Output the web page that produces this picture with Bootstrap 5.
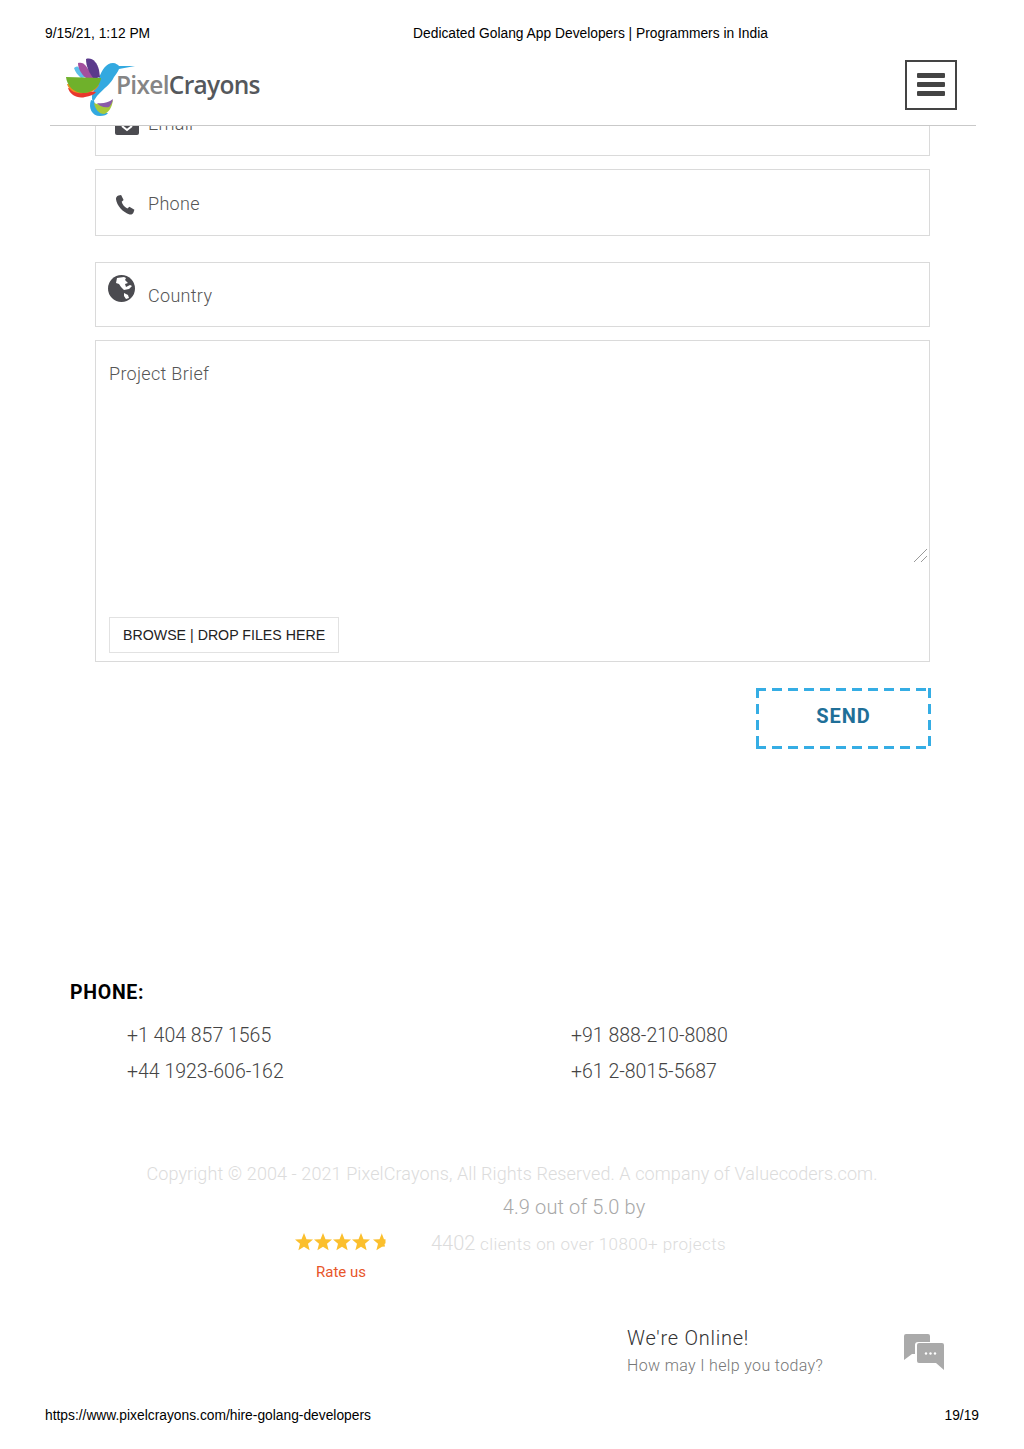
<!DOCTYPE html>
<html lang="en">
<head>
  <meta charset="UTF-8" />
  <meta name="viewport" content="width=device-width, initial-scale=1" />
  <title>Dedicated Golang App Developers | Programmers in India</title>
  <link href="https://cdn.jsdelivr.net/npm/bootstrap@5.3.0/dist/css/bootstrap.min.css" rel="stylesheet" />
  <style>
    body {
      width: 1024px;
      height: 1449px;
      overflow: hidden;
      background: #fff;
      font-family: Roboto, "Liberation Sans", sans-serif;
      font-weight: 300;
      color: #555;
    }

    .print-line {
      font-family: "Liberation Sans", Arial, sans-serif;
      font-size: 13.8px;
      font-weight: 400;
      line-height: 16px;
      color: #000;
      padding: 0 45px;
    }

    .print-top { padding-top: 26px; height: 46px; }
    .print-title { margin-left: 263px; }

    .site-head {
      height: 80px;
      margin: 0 48px 0 50px;
      padding: 0 19px 0 16px;
      border-bottom: 1px solid #c9c9c9;
    }

    .logo-svg { margin-top: 5px; flex: none; }
    .logo-text { font-family: "Open Sans", sans-serif; font-size: 24.5px; font-weight: 600; letter-spacing: -.7px; color: #858585; margin-left: -20px; }
    .logo-text b { color: #55585c; font-weight: 600; }

    .menu-box {
      width: 52px;
      height: 50px;
      border: 2px solid #444;
      border-radius: 0;
      margin-top: -2px;
      padding: 0;
    }
    .menu-box span { display: block; width: 28px; height: 5px; margin: 2px auto; background: #444; border-radius: 1px; }

    .form-wrap { margin: 0 94px 0 95px; }
    .field-clip { height: 30px; overflow: hidden; }
    .field-box {
      border: 1px solid #dadada;
      font-size: 18px;
      letter-spacing: .3px;
      color: #555;
      background: #fff;
    }
    .field-clip .field-box { height: 66px; flex: 0 0 66px; width: 100%; }
    .field-tel { height: 67px; margin-top: 13px; padding-top: 2px; }
    .field-country { height: 65px; margin-top: 26px; }
    .field-brief { height: 322px; margin-top: 13px; padding: 19px 13px 7px; }
    .field-ico { width: 52px; padding-left: 19px; flex: none; }
    .globe-svg { margin: 12px 0 0 -7px; }
    .country-label { margin-top: 19px; }
    .brief-grip { margin: 161px -12px 0 auto; width: 15px; height: 15px; display: block; }
    .browse-btn {
      font-family: "Liberation Sans", Arial, sans-serif;
      font-size: 14.2px;
      color: #222;
      border: 1px solid #e2e2e2;
      border-radius: 0;
      padding: 0 13px;
      height: 36px;
      line-height: 34px;
      margin-top: 54px;
      background: #fff;
    }
    .send-btn {
      width: 175px;
      height: 61px;
      margin: 26px -1px 0 0;
      border: 0;
      border-radius: 0;
      --dash: #35ade4;
      background:
        repeating-linear-gradient(90deg, var(--dash) 0 10px, transparent 10px 16px) top / 100% 3px no-repeat,
        repeating-linear-gradient(90deg, var(--dash) 0 10px, transparent 10px 16px) bottom / 100% 3px no-repeat,
        repeating-linear-gradient(180deg, var(--dash) 0 10px, transparent 10px 16px) left / 3px 100% no-repeat,
        repeating-linear-gradient(180deg, var(--dash) 0 10px, transparent 10px 16px) right / 3px 100% no-repeat;
      color: #1f6f98;
      font-size: 20px;
      font-weight: 700;
      letter-spacing: 1px;
      padding: 0 0 5px;
    }

    .phone-head { margin: 232px 0 0 70px; font-size: 19.5px; font-weight: 700; color: #000; letter-spacing: .7px; line-height: 24px; }
    .phone-grid { margin: 13px 0 0 127px; width: 888px; font-size: 19.5px; letter-spacing: 0; color: #444; }
    .phone-grid .col-6 { height: 36px; line-height: 36px; }

    .copy-line { margin-top: 72px; font-size: 18px; letter-spacing: .1px; color: #dcdcdc; line-height: 24px; text-align: center; }
    .rate-wrap { margin-left: 295px; }
    .rate-left { width: 92px; margin-top: 47px; text-align: center; }
    .rate-link { color: #e8562a; font-size: 15px; font-weight: 400; margin-top: 11px; line-height: 20px; white-space: nowrap; }
    .rate-right { margin-left: 44px; width: 295px; }
    .rate-score { font-size: 20px; letter-spacing: .13px; color: #a8a8a8; line-height: 26px; text-align: center; padding-right: 9px; margin-top: 8px; }
    .rate-count { font-size: 17px; letter-spacing: .43px; color: #dcdcdc; margin-top: 10px; line-height: 26px; white-space: nowrap; }
    .rate-count strong { font-size: 20px; font-weight: 300; letter-spacing: 0; }

    .chat-wrap { margin: 43px 80px 0 627px; height: 83px; }
    .chat-title { font-size: 20px; color: #333; letter-spacing: .75px; line-height: 26px; }
    .chat-sub { font-size: 16px; color: #777; letter-spacing: .35px; line-height: 24px; margin-top: 3px; }
    .chat-ico { margin-top: 9px; }
  </style>
</head>
<body>
  <div class="print-line print-top d-flex">
    <span>9/15/21, 1:12 PM</span>
    <span class="print-title">Dedicated Golang App Developers | Programmers in India</span>
  </div>

  <header class="site-head d-flex justify-content-between align-items-center">
    <a class="d-flex align-items-center text-decoration-none" href="#">
      <svg class="logo-svg" width="70" height="60" viewBox="0 0 70 60">
        <path d="M33 20C36 12 40 5 47 5c3 0 5 2 6 3l16 0-16 3c-1 3-3 5-5 8-3 7-10 11-17 19l-4 6c-2-4-1-8 1-12 2-4 4-8 5-12z" fill="#33a9e0"/>
        <path d="M25 42c-3 8 1 16 9 16 4 0 7-1 8-3-6 0-12-5-14-12z" fill="#33a9e0"/>
        <path d="M28 45c5 2 12 2 19-3-1 8-5 13-9 14-5 0-9-5-10-11z" fill="#a6c93a"/>
        <path d="M31 45c5 1 11 0 16-4-1 4-2 6-4 8-5 1-10-1-12-4z" fill="#8a5aa8"/>
        <path d="M8 10c2-2 4-2 5 0l7 9-5 1C12 17 9 14 8 10z" fill="#5dc0ea"/>
        <path d="M12 5c3-1 6 0 8 3l8 12-8 0C15 16 12 10 12 5z" fill="#a34f9e"/>
        <path d="M20 1c6-2 11 3 13 11l1 7-6 2C23 15 20 8 20 1z" fill="#5b3a8c"/>
        <path d="M2 30c2 7 10 11 17 9 5-1 9-2 11-5z" fill="#e8372e"/>
        <path d="M1 26c2 7 9 10 16 9 7 0 13-2 16-8z" fill="#f08a1d"/>
        <path d="M0 19l35 1c-1 8-8 15-18 15C8 35 1 28 0 19z" fill="#6fb12b"/>
      </svg>
      <span class="logo-text">Pixel<b>Crayons</b></span>
    </a>
    <button class="btn menu-box d-flex flex-column justify-content-center" type="button" aria-label="Toggle navigation">
      <span></span><span></span><span></span>
    </button>
  </header>

  <form class="form-wrap">
    <div class="field-clip d-flex flex-column justify-content-end">
      <label class="field-box d-flex align-items-center">
        <span class="field-ico">
          <svg width="24" height="20" viewBox="0 0 24 20"><path d="M2 0h20a2 2 0 0 1 2 2v16a2 2 0 0 1-2 2H2a2 2 0 0 1-2-2V2a2 2 0 0 1 2-2z" fill="#4b4b50"/><path d="M7 11l5 4 5-4" stroke="#fff" stroke-width="2" fill="none"/></svg>
        </span>
        Email
      </label>
    </div>

    <label class="field-box field-tel d-flex align-items-center">
      <span class="field-ico">
        <svg width="20" height="20" viewBox="0 0 20 20"><path d="M3.500.5L6.100 0l2.500 5-1.900 1.800c.6 2.700 3 5.600 5.700 6.600l2-1.700 5 3-.8 2.600c-.6 1.700-2.300 2.600-4 2.200C8 17.500 1.700 10.500 1 4.300.8 2.600 1.900 1.100 3.500.5z" fill="#4b4b50"/></svg>
      </span>
      Phone
    </label>

    <label class="field-box field-country d-flex">
      <span class="field-ico">
        <svg class="d-block globe-svg" width="27" height="27" viewBox="0 0 27 27"><circle cx="13.500" cy="13.500" r="13.500" fill="#4b4b50"/><path d="M9 3l7-1 2 1-1 2 3 3-3 1 1 3 4-2 2 1-3 3-5 1-3-3-2-3-3-1zM16 18l4 2 1 3-3 1-2-3z" fill="#fff"/></svg>
      </span>
      <span class="country-label">Country</span>
    </label>

    <div class="field-box field-brief">
      <div>Project Brief</div>
      <svg class="brief-grip" viewBox="0 0 15 15"><path d="M1 14L14 1M8 14l6-6" stroke="#999" fill="none"/></svg>
      <button class="btn browse-btn" type="button">BROWSE | DROP FILES HERE</button>
    </div>

    <div class="d-flex justify-content-end">
      <button class="btn send-btn" type="button">SEND</button>
    </div>
  </form>

  <div class="phone-head">PHONE:</div>
  <div class="row g-0 phone-grid">
    <div class="col-6">+1 404 857 1565</div>
    <div class="col-6">+91 888-210-8080</div>
    <div class="col-6">+44 1923-606-162</div>
    <div class="col-6">+61 2-8015-5687</div>
  </div>

  <div class="copy-line">Copyright © 2004 - 2021 PixelCrayons, All Rights Reserved. A company of Valuecoders.com.</div>

  <div class="rate-wrap d-flex">
    <div class="rate-left">
      <svg class="d-block" width="92" height="18" viewBox="0 0 92 18">
        <defs><path id="starShape" d="M9 0l2.500 6.200 6.500.4-5 4.200 1.600 6.500L9 13.700l-5.600 3.600L5 10.800 0 6.600l6.500-.4z"/></defs>
        <use href="#starShape" fill="#fbbf2d"/>
        <use href="#starShape" x="19" fill="#fbbf2d"/>
        <use href="#starShape" x="38" fill="#fbbf2d"/>
        <use href="#starShape" x="57" fill="#fbbf2d"/>
        <g transform="translate(78 0)"><path d="M9 0v13.700l-5.600 3.600L5 10.800 0 6.600l6.500-.4z" fill="#fbbf2d"/><path d="M9 1l2 5.200 1.500.1v4l-1 .8.500 2.500L9 13.700z" fill="#fbbf2d"/></g>
      </svg>
      <div class="rate-link">Rate us</div>
    </div>
    <div class="rate-right">
      <div class="rate-score">4.9 out of 5.0 by</div>
      <div class="rate-count"><strong>4402</strong> clients on over 10800+ projects</div>
    </div>
  </div>

  <div class="chat-wrap d-flex justify-content-between">
    <div>
      <div class="chat-title">We're Online!</div>
      <div class="chat-sub">How may I help you today?</div>
    </div>
    <svg class="chat-ico" width="40" height="36" viewBox="0 0 40 36">
      <path d="M2 0h22a2 2 0 0 1 2 2v6H14a3 3 0 0 0-3 3v9l-3 0-8 6V2a2 2 0 0 1 2-2z" fill="#aaa"/>
      <path d="M15 9h23a2 2 0 0 1 2 2v25l-8-7H15a2 2 0 0 1-2-2V11a2 2 0 0 1 2-2z" fill="#aaa"/>
      <circle cx="22" cy="19.500" r="1.200" fill="#fff"/><circle cx="26.500" cy="19.500" r="1.200" fill="#fff"/><circle cx="31" cy="19.500" r="1.200" fill="#fff"/>
    </svg>
  </div>

  <div class="print-line d-flex justify-content-between">
    <span>https://www.pixelcrayons.com/hire-golang-developers</span>
    <span>19/19</span>
  </div>
</body>
</html>
